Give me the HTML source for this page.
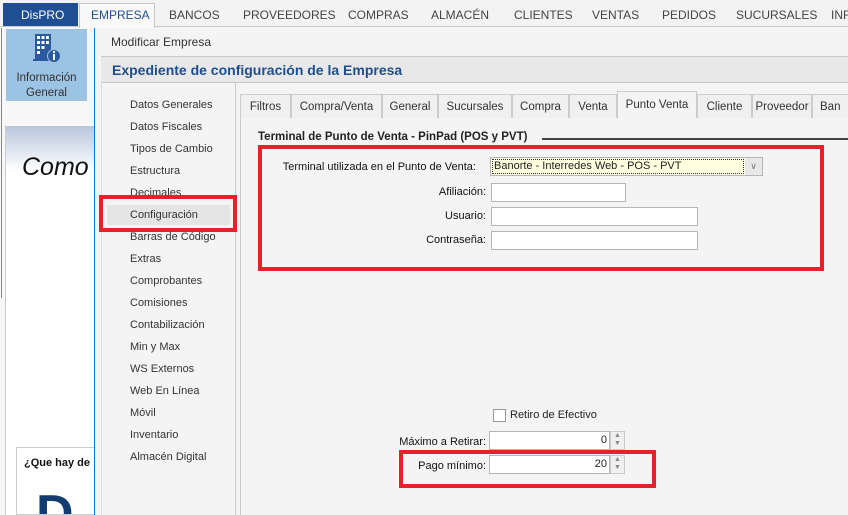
<!DOCTYPE html>
<html><head><meta charset="utf-8"><style>
*{box-sizing:border-box;margin:0;padding:0}
html,body{width:848px;height:515px;overflow:hidden}
body{background:#f4f4f4;font-family:"Liberation Sans",sans-serif;font-size:12px;color:#222;position:relative}
.a{position:absolute}
.menu span{position:absolute;top:8px;font-size:12px;color:#444}
.side div{position:absolute;left:130px;font-size:11px;color:#333}
.tab{position:absolute;top:94px;height:24px;border:1px solid #ccc;border-bottom:none;background:#f0f0f0;font-size:11.5px;padding-top:6px;text-align:center;color:#333;white-space:nowrap;overflow:hidden}
.lbl{position:absolute;font-size:11px;color:#111;text-align:right}
.inp{position:absolute;background:#fff;border:1px solid #b5b5b5;height:19px}
.red{position:absolute;border:4px solid #e8202a}
</style></head><body>
<div class="a" style="left:0;top:0;width:848px;height:27px;background:#f3f3f3;border-bottom:1px solid #c9c9c9"></div>
<div class="a" style="left:3px;top:3px;width:75px;height:23px;background:#1f4e93;color:#fff;font-size:12px;padding:5px 0 0 18px">DisPRO</div>
<div class="a" style="left:79px;top:3px;width:76px;height:25px;background:#f9f9f9;border:1px solid #c9c9c9;border-bottom:none"></div>
<div class="menu">
<span style="left:91px;color:#1f4e93">EMPRESA</span><span style="left:169px">BANCOS</span><span style="left:243px">PROVEEDORES</span><span style="left:348px">COMPRAS</span><span style="left:431px">ALMACÉN</span><span style="left:514px">CLIENTES</span><span style="left:592px">VENTAS</span><span style="left:662px">PEDIDOS</span><span style="left:736px">SUCURSALES</span><span style="left:831px">INF</span>
</div>
<div class="a" style="left:0;top:28px;width:95px;height:487px;background:#f7f7f7"></div>
<div class="a" style="left:6px;top:29px;width:81px;height:72px;background:#9dc3e4"></div>
<svg class="a" style="left:33px;top:33px" width="28" height="30" viewBox="0 0 28 30"><rect x="2" y="1" width="16" height="26" fill="#2b5aa0"/><g fill="#fff"><rect x="4" y="3" width="3" height="3"/><rect x="8.5" y="3" width="3" height="3"/><rect x="13" y="3" width="3" height="3"/><rect x="4" y="8" width="3" height="3"/><rect x="8.5" y="8" width="3" height="3"/><rect x="13" y="8" width="3" height="3"/><rect x="4" y="13" width="3" height="3"/><rect x="8.5" y="13" width="3" height="3"/><rect x="4" y="18" width="3" height="3"/></g><rect x="0" y="26" width="20" height="2" fill="#2b5aa0"/><circle cx="21" cy="23" r="6.5" fill="#2b5aa0" stroke="#9dc3e4"/><rect x="20" y="21" width="2" height="6" fill="#fff"/><rect x="20" y="18" width="2" height="2" fill="#fff"/></svg>
<div class="a" style="left:6px;top:71px;width:81px;text-align:center;font-size:11.5px;color:#333;line-height:15px">Información<br>General</div>
<div class="a" style="left:5px;top:125px;width:90px;height:390px;background:#fff;border-left:1px solid #ccc"></div>
<div class="a" style="left:6px;top:126px;width:89px;height:45px;background:linear-gradient(#b8c6dc,#fff)"></div>
<div class="a" style="left:22px;top:153px;font-size:25px;font-style:italic;color:#111">Como</div>
<div class="a" style="left:16px;top:447px;width:79px;height:68px;border:1px solid #ccc;border-right:none;background:#fff;overflow:hidden">
<div class="a" style="left:7px;top:9px;font-size:11px;font-weight:bold;color:#111;white-space:nowrap">¿Que hay de</div>
<div class="a" style="left:19px;top:40px;font-size:52px;font-weight:bold;color:#123b70;line-height:52px">D</div>
</div>
<div class="a" style="left:0;top:28px;width:2px;height:270px;border-right:1px solid #888"></div>
<div class="a" style="left:94px;top:28px;width:754px;height:487px;background:#f4f4f4;border-left:1px solid #0078d7"></div>
<div class="a" style="left:111px;top:35px;font-size:12px;color:#333">Modificar Empresa</div>
<div class="a" style="left:101px;top:56px;width:747px;height:27px;background:#e8e8e8;border-top:1px solid #c8c8c8;border-bottom:1px solid #c8c8c8"></div>
<div class="a" style="left:112px;top:62px;font-size:14px;font-weight:bold;color:#1f4e8c">Expediente de configuración de la Empresa</div>
<div class="a" style="left:101px;top:83px;width:1px;height:432px;background:#ddd"></div>
<div class="a" style="left:235px;top:83px;width:1px;height:432px;background:#ccc"></div>
<div class="a" style="left:107px;top:205px;width:123px;height:20px;background:#e5e5e5"></div>
<div class="side">
<div style="top:99px">Datos Generales</div><div style="top:121px">Datos Fiscales</div><div style="top:143px">Tipos de Cambio</div><div style="top:165px">Estructura</div><div style="top:187px">Decimales</div>
<div style="top:209px">Configuración</div><div style="top:231px">Barras de Código</div><div style="top:253px">Extras</div><div style="top:275px">Comprobantes</div><div style="top:297px">Comisiones</div><div style="top:319px">Contabilización</div><div style="top:341px">Min y Max</div><div style="top:363px">WS Externos</div><div style="top:385px">Web En Línea</div><div style="top:407px">Móvil</div><div style="top:429px">Inventario</div><div style="top:451px">Almacén Digital</div>
</div>
<div class="red" style="left:99px;top:195px;width:138px;height:37px"></div>
<div class="a" style="left:240px;top:117px;width:608px;height:398px;background:#f4f4f4;border:1px solid #ccc;border-right:none;border-bottom:none"></div>
<div class="tab" style="left:240px;width:51px">Filtros</div>
<div class="tab" style="left:291px;width:91px">Compra/Venta</div>
<div class="tab" style="left:382px;width:56px">General</div>
<div class="tab" style="left:438px;width:74px">Sucursales</div>
<div class="tab" style="left:512px;width:57px">Compra</div>
<div class="tab" style="left:569px;width:48px">Venta</div>
<div class="tab" style="left:617px;top:91px;height:27px;width:80px;background:#f4f4f4;padding-top:7px">Punto Venta</div>
<div class="tab" style="left:697px;width:55px">Cliente</div>
<div class="tab" style="left:752px;width:60px">Proveedor</div>
<div class="tab" style="left:812px;width:40px;text-align:left;padding-left:7px">Ban</div>
<div class="a" style="left:258px;top:131px;font-size:11.5px;font-weight:bold;color:#222">Terminal de Punto de Venta - PinPad (POS y PVT)</div>
<div class="a" style="left:542px;top:138px;width:306px;height:2px;background:#444"></div>
<div class="red" style="left:258px;top:145px;width:566px;height:126px"></div>
<div class="lbl" style="left:270px;top:161px;width:206px">Terminal utilizada en el Punto de Venta:</div>
<div class="inp" style="left:490px;top:157px;width:273px;height:19px;background:#ffffe0"></div>
<div class="a" style="left:492px;top:159px;width:252px;height:15px;border:1px dotted #333;font-size:11px;padding-left:1px;line-height:13px">Banorte - Interredes Web - POS - PVT</div>
<div class="a" style="left:745px;top:158px;width:17px;height:17px;background:#e8e8e8;color:#777;font-size:9px;text-align:center;line-height:17px">∨</div>
<div class="lbl" style="left:380px;top:186px;width:106px">Afiliación:</div>
<div class="inp" style="left:491px;top:183px;width:135px"></div>
<div class="lbl" style="left:380px;top:210px;width:106px">Usuario:</div>
<div class="inp" style="left:491px;top:207px;width:207px"></div>
<div class="lbl" style="left:380px;top:234px;width:106px">Contraseña:</div>
<div class="inp" style="left:491px;top:231px;width:207px"></div>
<div class="a" style="left:493px;top:409px;width:13px;height:13px;border:1px solid #999;background:#fff"></div>
<div class="a" style="left:510px;top:409px;font-size:11px;color:#222">Retiro de Efectivo</div>
<div class="lbl" style="left:380px;top:436px;width:106px">Máximo a Retirar:</div>
<div class="inp" style="left:489px;top:431px;width:121px;text-align:right;padding:2px 2px 0 0;font-size:11px">0</div>
<div class="a" style="left:610px;top:431px;width:15px;height:19px;border:1px solid #ccc;background:#f0f0f0;font-size:7px;color:#888;text-align:center;line-height:8px">▲<br>▼</div>
<div class="red" style="left:399px;top:450px;width:257px;height:38px"></div>
<div class="lbl" style="left:380px;top:460px;width:106px">Pago mínimo:</div>
<div class="inp" style="left:489px;top:455px;width:121px;text-align:right;padding:2px 2px 0 0;font-size:11px">20</div>
<div class="a" style="left:610px;top:455px;width:15px;height:19px;border:1px solid #ccc;background:#f0f0f0;font-size:7px;color:#888;text-align:center;line-height:8px">▲<br>▼</div>
</body></html>
